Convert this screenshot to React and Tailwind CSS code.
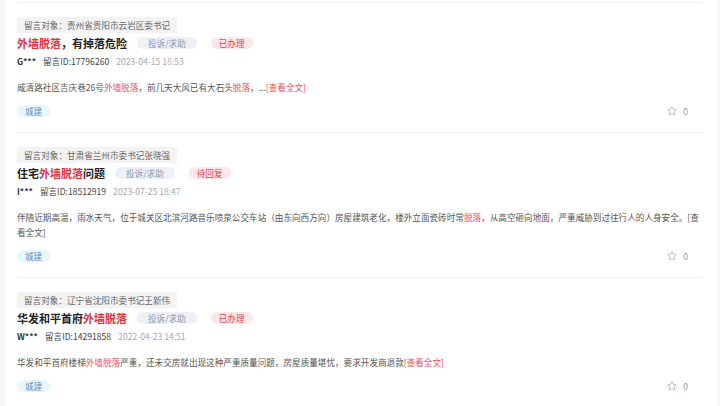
import React from 'react';
import { Star } from 'lucide-react';

const items = [
  {
    target: '贵州省贵阳市云岩区委书记',
    title: [{ t: '外墙脱落', hl: true }, { t: '，有掉落危险' }],
    status: '已办理',
    user: 'G***',
    id: '17796260',
    time: '2023-04-15 18:53',
    body: [
      { t: '威清路社区吉庆巷26号' },
      { t: '外墙脱落', hl: true },
      { t: '，前几天大风已有大石头' },
      { t: '脱落', hl: true },
      { t: '，...' },
      { t: '[查看全文]', hl: true },
    ],
  },
  {
    target: '甘肃省兰州市委书记张晓强',
    title: [{ t: '住宅' }, { t: '外墙脱落', hl: true }, { t: '问题' }],
    status: '待回复',
    user: 'I***',
    id: '18512919',
    time: '2023-07-25 18:47',
    body: [
      { t: '伴随近期高温，雨水天气，位于城关区北滨河路音乐喷泉公交车站（由东向西方向）房屋建筑老化，楼外立面瓷砖时常' },
      { t: '脱落', hl: true },
      { t: '，从高空砸向地面，严重威胁到过往行人的人身安全。[查看全文]' },
    ],
  },
  {
    target: '辽宁省沈阳市委书记王新伟',
    title: [{ t: '华发和平首府' }, { t: '外墙脱落', hl: true }],
    status: '已办理',
    user: 'W***',
    id: '14291858',
    time: '2022-04-23 14:51',
    body: [
      { t: '华发和平首府楼梯' },
      { t: '外墙脱落', hl: true },
      { t: '严重，还未交房就出现这种严重质量问题，房屋质量堪忧，要求开发商退款' },
      { t: '[查看全文]', hl: true },
    ],
  },
];

function MessageItem({ item }) {
  return (
    <div className="border-t border-[#eeeeee] pt-[14px] pb-[15px]">
      <div className="flex">
        <div className="h-[16px] px-[7px] bg-[#f3f3f3] text-[#666] text-[8.6px] leading-[16px]">
          留言对象：{item.target}
        </div>
      </div>
      <div className="flex items-center h-[20px]">
        <h3 className="text-[11px] font-bold text-[#222] leading-[20px]">
          {item.title.map((p, i) => (
            <span key={i} className={p.hl ? 'text-[#e0323c]' : ''}>{p.t}</span>
          ))}
        </h3>
        <span className="ml-[10px] h-[12px] px-[11px] rounded-full bg-[#edf1f7] text-[#8898b0] text-[8.6px] leading-[12px]">
          投诉/求助
        </span>
        <span className="ml-[14px] h-[12px] px-[8px] rounded-full bg-[#fde7e9] text-[#e4434e] text-[8.6px] leading-[12px]">
          {item.status}
        </span>
      </div>
      <div className="flex items-center gap-[7px] h-[16px] text-[8.6px] leading-[16px]">
        <span className="font-bold text-[#333]">{item.user}</span>
        <span className="text-[#444]">留言ID:{item.id}</span>
        <span className="text-[#aaa]">{item.time}</span>
      </div>
      <p className="mt-[11px] text-[8.6px] leading-[15px] text-[#555]">
        {item.body.map((p, i) => (
          <span key={i} className={p.hl ? 'text-[#e5505a]' : ''}>{p.t}</span>
        ))}
      </p>
      <div className="mt-[10px] flex items-center justify-between">
        <span className="h-[12px] px-[8px] rounded-full bg-[#e8f8f8] text-[#5c8dc2] text-[8.6px] leading-[12px]">
          城建
        </span>
        <div className="flex items-center gap-[6px] pr-[15px] text-[#999] text-[8.6px] leading-[12px]">
          <Star size={10} strokeWidth={1.6} />
          <span>0</span>
        </div>
      </div>
    </div>
  );
}

export default function App() {
  return (
    <div className="w-[720px] h-[406px] overflow-hidden bg-[#f5f6f8]" style={{ fontFamily: '"Noto Sans CJK SC", "Noto Sans", sans-serif' }}>
      <div className="ml-[5px] w-[712px] h-full bg-white pt-[2px] pl-[12px] pr-[14px]">
        {items.map((item, i) => (
          <MessageItem key={i} item={item} />
        ))}
      </div>
    </div>
  );
}
